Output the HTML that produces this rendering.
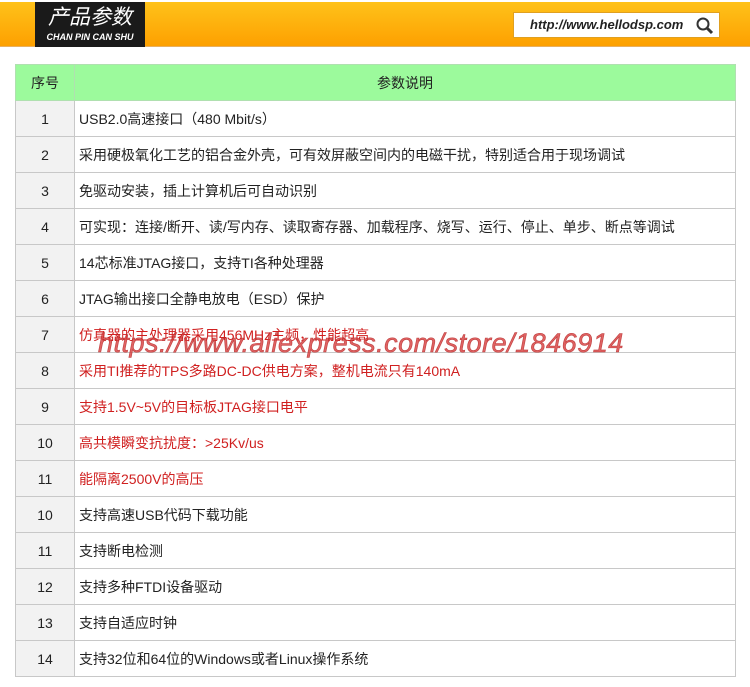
<!DOCTYPE html>
<html><head><meta charset="utf-8"><style>
body{margin:0;width:750px;height:687px;background:#fff;position:relative;overflow:hidden;font-family:"Liberation Sans","Noto Sans CJK SC",sans-serif}
.bar{position:absolute;left:0;top:2px;width:750px;height:44px;background:linear-gradient(#ffc21a,#fda000);border-bottom:1px solid #e8b060}
.logo{position:absolute;left:35px;top:2px;width:110px;height:45px;background:#1a1a1a;color:#fff;text-align:center}
.logo .a{font-size:21px;font-style:italic;margin-top:4px;line-height:23px}
.logo .b{font-size:9px;font-weight:bold;margin-top:3px;font-style:italic}
.url{position:absolute;left:513px;top:12px;width:207px;height:26px;background:#fff;border:1px solid #e0a020;box-sizing:border-box;font-size:13px;font-style:italic;font-weight:bold;color:#222;line-height:24px;padding-left:16px}
.url svg{position:absolute;right:4px;top:3px}
table{position:absolute;left:15px;top:64px;width:721px;border-collapse:collapse}
td{border:1px solid #c8c8c8;height:35px;padding:0;font-size:14px;color:#222}
td.n{width:58px;text-align:center;background:#f2f2f2}
td.t{padding-left:4px}
tr.h td{background:#9cfa9c;text-align:center;border-color:#b0e0b0}
.r td.t{color:#d02020}
.wm{position:absolute;left:98px;top:328px;font-family:"Liberation Sans",sans-serif;font-style:italic;font-size:27px;color:rgba(215,60,60,.8);letter-spacing:0.5px;white-space:nowrap;-webkit-text-stroke:0.6px rgba(180,40,40,.8)}
</style></head><body>
<div class="bar"></div>
<div class="logo"><div class="a">产品参数</div><div class="b">CHAN PIN CAN SHU</div></div>
<div class="url">http://www.hellodsp.com<svg width="20" height="20" viewBox="0 0 20 20"><circle cx="8" cy="8" r="5.5" fill="none" stroke="#333" stroke-width="2"/><path d="M12 12l5 5" stroke="#333" stroke-width="3"/></svg></div>
<table>
<tr class="h"><td class="n" style="background:#9cfa9c">序号</td><td>参数说明</td></tr>
<tr><td class="n">1</td><td class="t">USB2.0高速接口（480 Mbit/s）</td></tr>
<tr><td class="n">2</td><td class="t">采用硬极氧化工艺的铝合金外壳，可有效屏蔽空间内的电磁干扰，特别适合用于现场调试</td></tr>
<tr><td class="n">3</td><td class="t">免驱动安装，插上计算机后可自动识别</td></tr>
<tr><td class="n">4</td><td class="t">可实现：连接/断开、读/写内存、读取寄存器、加载程序、烧写、运行、停止、单步、断点等调试</td></tr>
<tr><td class="n">5</td><td class="t">14芯标准JTAG接口，支持TI各种处理器</td></tr>
<tr><td class="n">6</td><td class="t">JTAG输出接口全静电放电（ESD）保护</td></tr>
<tr class="r"><td class="n">7</td><td class="t">仿真器的主处理器采用456MHz主频，性能超高</td></tr>
<tr class="r"><td class="n">8</td><td class="t">采用TI推荐的TPS多路DC-DC供电方案，整机电流只有140mA</td></tr>
<tr class="r"><td class="n">9</td><td class="t">支持1.5V~5V的目标板JTAG接口电平</td></tr>
<tr class="r"><td class="n">10</td><td class="t">高共模瞬变抗扰度：&gt;25Kv/us</td></tr>
<tr class="r"><td class="n">11</td><td class="t">能隔离2500V的高压</td></tr>
<tr><td class="n">10</td><td class="t">支持高速USB代码下载功能</td></tr>
<tr><td class="n">11</td><td class="t">支持断电检测</td></tr>
<tr><td class="n">12</td><td class="t">支持多种FTDI设备驱动</td></tr>
<tr><td class="n">13</td><td class="t">支持自适应时钟</td></tr>
<tr><td class="n">14</td><td class="t">支持32位和64位的Windows或者Linux操作系统</td></tr>
</table>
<div class="wm">https://www.aliexpress.com/store/1846914</div>
</body></html>
